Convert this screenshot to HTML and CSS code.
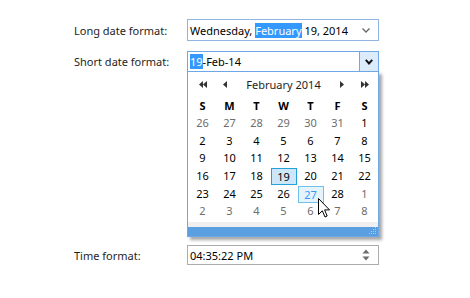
FILE: index.html
```html
<!DOCTYPE html>
<html lang="en">
<head>
  <meta charset="UTF-8" />
  <title>Date and time formats</title>
  <link rel="stylesheet" href="styles.css">
</head>
<body>
  <div class="form">
    <div class="row">
      <label class="label">Long date format:</label>
      <div class="field field-long">
        <span class="value">Wednesday, <span class="sel">February</span> 19, 2014</span>
        <svg class="chev-light" width="8" height="5" viewBox="0 0 8 5"><path d="M0.5 0.5 L4 4 L7.5 0.5" fill="none" stroke="#6b6b6b" stroke-width="1.4"/></svg>
      </div>
    </div>

    <div class="row">
      <label class="label">Short date format:</label>
      <div class="field field-short">
        <span class="value"><span class="sel">19</span>-Feb-14</span>
        <span class="drop-btn">
          <svg width="8" height="6" viewBox="0 0 8 6"><path d="M0.8 0.8 L4 4.4 L7.2 0.8" fill="none" stroke="#111" stroke-width="2"/></svg>
        </span>

        <!-- calendar dropdown -->
        <div class="calendar">
          <div class="cal-nav">
            <svg class="nav-dbl" width="8" height="7" viewBox="0 0 8 7"><path d="M4 0 L0 3.5 L4 7 Z M8 0 L4 3.5 L8 7 Z" fill="#333"/></svg>
            <svg class="nav-prev" width="4" height="7" viewBox="0 0 4 7"><path d="M4 0 L0 3.5 L4 7 Z" fill="#333"/></svg>
            <span class="cal-title">February 2014</span>
            <svg class="nav-next" width="4" height="7" viewBox="0 0 4 7"><path d="M0 0 L4 3.5 L0 7 Z" fill="#333"/></svg>
            <svg class="nav-dbl" width="8" height="7" viewBox="0 0 8 7"><path d="M0 0 L4 3.5 L0 7 Z M4 0 L8 3.5 L4 7 Z" fill="#333"/></svg>
          </div>
          <div class="cal-head">
            <span>S</span><span>M</span><span>T</span><span>W</span><span>T</span><span>F</span><span>S</span>
          </div>
          <div class="cal-days" id="days"></div>
          <div class="cal-gap"></div>
          <div class="cal-strip"></div>
          <div class="cal-bar">
            <svg class="grip" width="10" height="8" viewBox="0 0 10 8">
              <g fill="#a9ccf2">
                <rect x="8" y="0" width="1" height="1"/>
                <rect x="6" y="2" width="1" height="1"/><rect x="8" y="2" width="1" height="1"/>
                <rect x="4" y="4" width="1" height="1"/><rect x="6" y="4" width="1" height="1"/><rect x="8" y="4" width="1" height="1"/>
                <rect x="2" y="6" width="1" height="1"/><rect x="4" y="6" width="1" height="1"/><rect x="6" y="6" width="1" height="1"/><rect x="8" y="6" width="1" height="1"/>
              </g>
            </svg>
          </div>
        </div>
      </div>
    </div>

    <div class="row row-time">
      <label class="label">Time format:</label>
      <div class="field field-time">
        <span class="value">04:35:22 PM</span>
        <svg class="spin" width="8" height="12" viewBox="0 0 8 12"><path d="M4 0.5 L7.5 4.5 L0.5 4.5 Z M0.5 7.5 L7.5 7.5 L4 11.5 Z" fill="#6b6b6b"/></svg>
      </div>
    </div>
  </div>

  <svg class="cursor" width="13" height="20" viewBox="0 0 13 20">
    <path d="M0.5 0.5 L0.5 16.5 L4.3 12.8 L7 19 L9.2 18 L6.6 11.9 L11.5 11.9 Z" fill="#fff" stroke="#000" stroke-width="1" stroke-linejoin="round"/>
  </svg>

  <script>
    const days = [
      [26, 0], [27, 0], [28, 0], [29, 0], [30, 0], [31, 0], [1, 1],
      [2, 1], [3, 1], [4, 1], [5, 1], [6, 1], [7, 1], [8, 1],
      [9, 1], [10, 1], [11, 1], [12, 1], [13, 1], [14, 1], [15, 1],
      [16, 1], [17, 1], [18, 1], [19, 1], [20, 1], [21, 1], [22, 1],
      [23, 1], [24, 1], [25, 1], [26, 1], [27, 1], [28, 1], [1, 0],
      [2, 0], [3, 0], [4, 0], [5, 0], [6, 0], [7, 0], [8, 0]
    ];
    const grid = document.getElementById("days");
    days.forEach((d, i) => {
      const cell = document.createElement("span");
      cell.className = "day";
      if (!d[1]) cell.classList.add("other");
      if (i === 24) cell.classList.add("selected");
      if (i === 32) cell.classList.add("hover");
      cell.innerHTML = `<span>${d[0]}</span>`;
      grid.appendChild(cell);
    });
  </script>
</body>
</html>
```

FILE: styles.css
```css
body {
  margin: 0;
  background: #fff;
  font-family: "Noto Sans", "Open Sans", sans-serif;
  font-size: 11px;
  color: #000;
}

.form {
  padding: 19px 0 0 74px;
}

.row {
  display: flex;
  align-items: center;
  margin-bottom: 10px;
}
.row-time {
  margin-top: 173px;
}

.label {
  width: 113px;
  color: #1e1e1e;
}

.field {
  position: relative;
  box-sizing: border-box;
  width: 192px;
  height: 22px;
  display: flex;
  align-items: center;
  padding-left: 2px;
  background: #fff;
}
.field-long {
  border: 1px solid #8fb4e2;
}
.field-short {
  height: 21px;
  border: 1px solid #6fa8e6;
}
.field-time {
  height: 20px;
  border: 1px solid #acacac;
}

.value {
  flex: 1;
  white-space: nowrap;
}
.sel {
  background: #3399ff;
  color: #fff;
}

.chev-light {
  margin-right: 8px;
}
.spin {
  margin-right: 8px;
}

.drop-btn {
  box-sizing: border-box;
  width: 19px;
  height: 100%;
  display: flex;
  align-items: center;
  justify-content: center;
  background: #dcecfc;
  border-left: 1px solid #6fa8e6;
}

/* calendar popup */
.calendar {
  position: absolute;
  top: 19px;
  left: -1px;
  box-sizing: border-box;
  width: 192px;
  height: 166px;
  background: #fff;
  border: 1px solid #6fa8e6;
  box-shadow: 3px 3px 3px rgba(0, 0, 0, 0.35);
  display: flex;
  flex-direction: column;
  z-index: 10;
}

.cal-nav,
.cal-head,
.cal-days {
  display: grid;
  grid-template-columns: repeat(7, 27px);
  padding-left: 1px;
}

.cal-nav {
  height: 24px;
  align-items: center;
}
.cal-nav .nav-dbl {
  justify-self: center;
}
.cal-nav .nav-prev {
  justify-self: start;
  margin-left: 7px;
}
.cal-title {
  grid-column: span 3;
  text-align: center;
  white-space: nowrap;
  color: #1e1e1e;
}
.cal-nav .nav-next {
  justify-self: start;
  margin-left: 16px;
}

.cal-head {
  height: 18px;
  align-items: center;
  font-weight: bold;
  text-align: center;
}

.cal-days {
  grid-auto-rows: 17.6px;
}
.day {
  display: flex;
  align-items: center;
  justify-content: center;
}
.day.other {
  color: #6d6d6d;
}
.day.selected span,
.day.hover span {
  box-sizing: border-box;
  width: 26px;
  height: 17px;
  margin-top: 2px;
  display: flex;
  align-items: center;
  justify-content: center;
}
.day.selected span {
  background: #cce8f8;
  border: 1px solid #26a0da;
}
.day.hover span {
  background: #e5f3fb;
  border: 1px solid #70c0e7;
  color: #3399ff;
}

.cal-gap {
  height: 2px;
}
.cal-strip {
  height: 5px;
  background: #f0f0f0;
}
.cal-bar {
  flex: 1;
  background: #5b9fe1;
  display: flex;
  justify-content: flex-end;
  align-items: flex-end;
}
.grip {
  margin: 0 1px 1px 0;
}

.cursor {
  position: absolute;
  left: 318px;
  top: 198px;
  z-index: 20;
}
```
